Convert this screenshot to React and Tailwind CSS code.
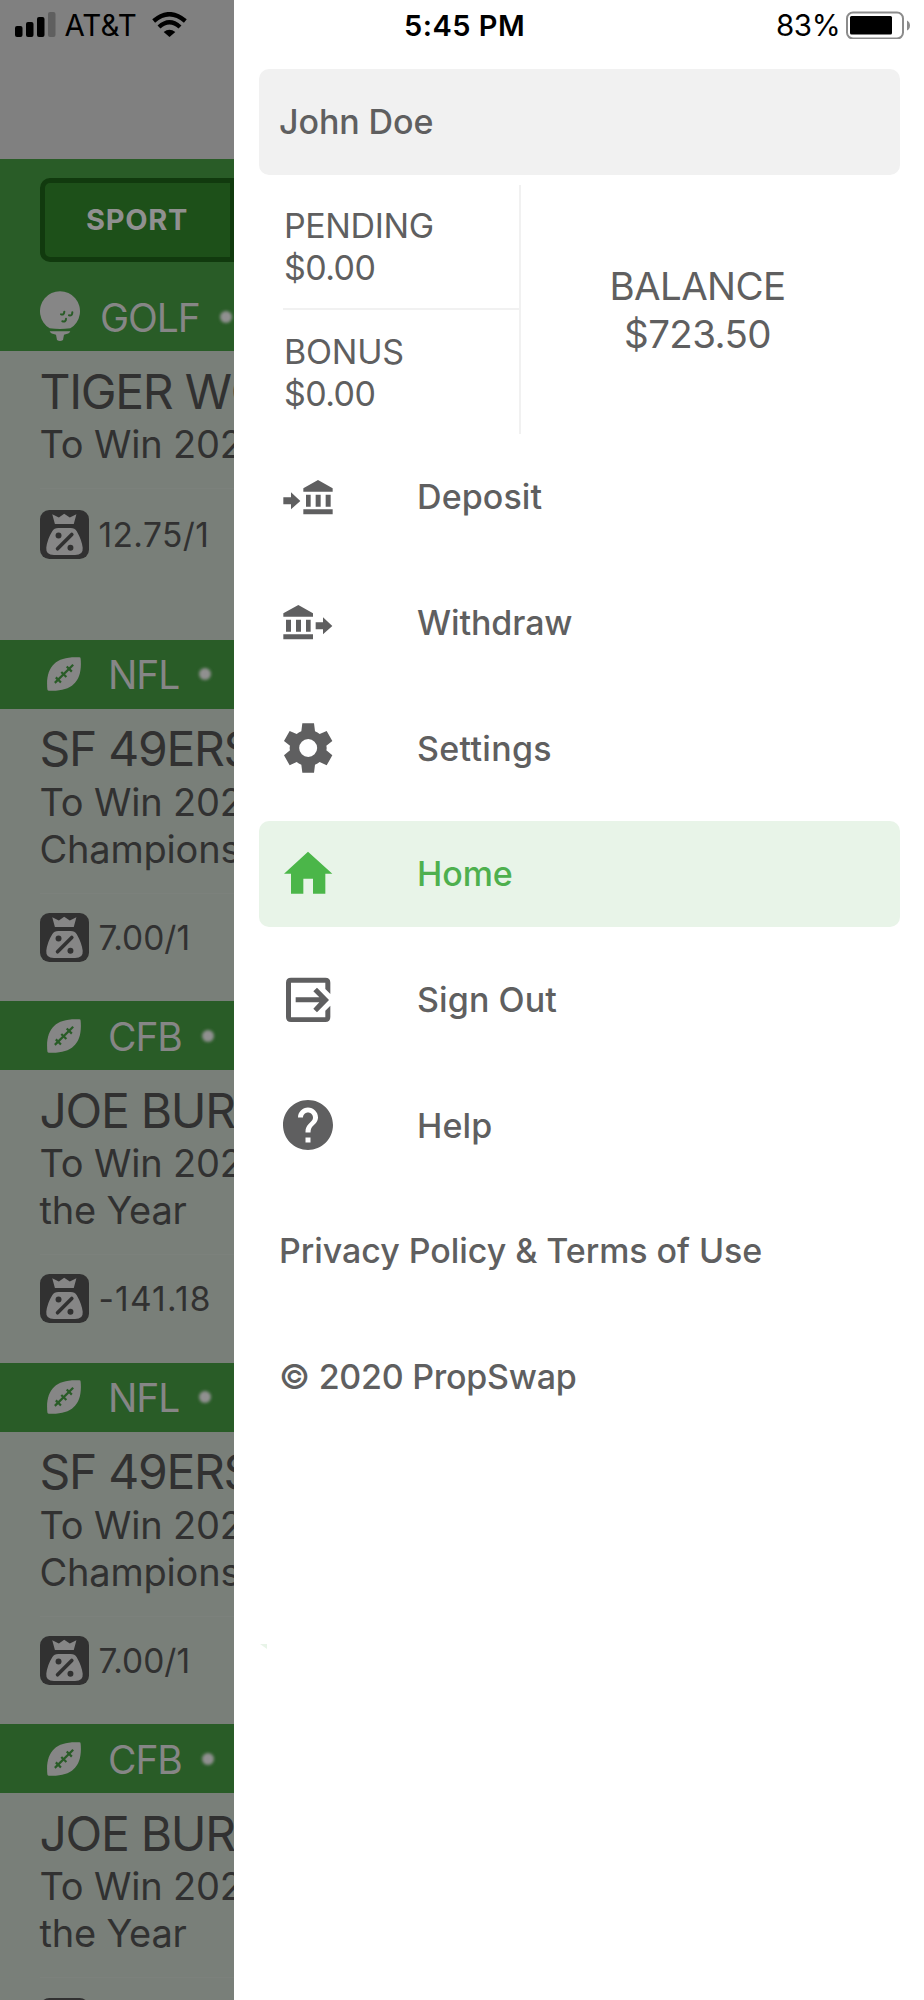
import React from "react";
import { MdHelp } from "react-icons/md";

const BETS = [
  { league: "GOLF", title: "TIGER WO", lines: ["To Win 202"], odds: "12.75/1", tracking: "tracking-[0.4px]", short: true },
  { league: "NFL", title: "SF 49ERS", lines: ["To Win 202", "Champions"], odds: "7.00/1", tracking: "tracking-[0px]" },
  { league: "CFB", title: "JOE BUR", lines: ["To Win 202", "the Year"], odds: "-141.18", tracking: "tracking-[1.2px]" },
  { league: "NFL", title: "SF 49ERS", lines: ["To Win 202", "Champions"], odds: "7.00/1", tracking: "tracking-[0px]" },
  { league: "CFB", title: "JOE BUR", lines: ["To Win 202", "the Year"], odds: "-141.18", tracking: "tracking-[1.2px]" },
];

const MENU = [
  { label: "Deposit", icon: DepositIcon, tracking: "tracking-[0.1px]" },
  { label: "Withdraw", icon: WithdrawIcon, tracking: "tracking-[-0.1px]" },
  { label: "Settings", icon: SettingsIcon, tracking: "tracking-[0.3px]" },
  { label: "Home", icon: HomeIcon, active: true, tracking: "tracking-[-0.1px]" },
  { label: "Sign Out", icon: SignOutIcon, tracking: "tracking-[0.1px]" },
  { label: "Help", icon: HelpIcon, tracking: "tracking-[0.1px]" },
];

function GolfIcon() {
  return (
    <svg viewBox="0 0 120 150" className="w-[40px] h-[50px] shrink-0">
      <path d="M29 112 A60 60 0 1 1 91 112 Q60 116 29 112Z" fill="#868686" />
      <path d="M29 121 H91 Q88 129 72 131 L69 147 Q60 153 51 147 L48 131 Q32 129 29 121Z" fill="#868686" />
      <g fill="none" stroke="#295c27" strokeWidth="6" strokeLinecap="round">
        <path d="M63 70 Q72 73 73 62" />
        <path d="M87 73 Q97 75 97 64" />
        <path d="M67 91 Q78 94 78 83" />
      </g>
    </svg>
  );
}

function FootballIcon() {
  return (
    <svg viewBox="0 0 100 100" className="w-[34px] h-[34px] shrink-0">
      <path d="M95 1 Q99 1 99 5 C105 72 74 103 5 99 Q1 99 1 95 C-5 28 26 -3 95 1Z" fill="#868686" />
      <g stroke="#295c27" strokeWidth="6.5" fill="none">
        <path d="M23 76 L77 23" />
        <path d="M26 60 L41 75 M42 44 L57 59 M58 28 L73 43" />
      </g>
    </svg>
  );
}

function MoneyBagIcon() {
  return (
    <svg viewBox="0 0 148 148" className="w-[49px] h-[49px] shrink-0">
      <rect width="148" height="148" rx="28" fill="#313131" />
      <path d="M37 13 L57 23 L73 11 L90 23 L110 13 L102 42 H45Z" fill="#868686" />
      <path d="M55 54 H93 Q105 54 111 64 Q126 90 129 114 Q131 136 106 136 H42 Q17 136 19 114 Q22 88 37 64 Q43 54 55 54Z" fill="#868686" />
      <path d="M53 117 L96 74" stroke="#313131" strokeWidth="11" strokeLinecap="round" />
      <circle cx="56" cy="77" r="9" fill="#313131" />
      <circle cx="92" cy="114" r="9" fill="#313131" />
    </svg>
  );
}

function DepositIcon() {
  return (
    <svg viewBox="-16 -38 180 180" className="w-[60px] h-[60px]" fill="currentColor">
      <path d="M0 53H23V38L51 64L23 89V74H0Z" />
      <path d="M104 1L148 26V36H60V26Z M68 45H82V81H68Z M97 45H112V81H97Z M127 45H142V81H127Z M60 89H148V104H60Z" />
    </svg>
  );
}

function WithdrawIcon() {
  return (
    <svg viewBox="-16 -38 180 180" className="w-[60px] h-[60px]" fill="currentColor">
      <path d="M97 53H119V38L147 64L119 89V74H97Z" />
      <path d="M45 1L89 26V36H0V26Z M8 45H23V81H8Z M38 45H53V81H38Z M68 45H82V81H68Z M0 89H89V104H0Z" />
    </svg>
  );
}

function SettingsIcon() {
  return (
    <svg viewBox="84 834 180 180" className="w-[60px] h-[60px]" fill="currentColor">
      <path
        fillRule="evenodd"
        d="M157 850H192L195 874Q203 877 209 882L230 873L247 903L229 917Q231 924 229 931L247 946L230 976L209 966Q203 971 195 974L192 998H157L154 974Q146 971 140 966L119 976L102 946L120 931Q118 924 120 917L102 903L119 873L140 882Q146 877 154 874Z M174.500 897A27 27 0 1 0 174.500 951A27 27 0 1 0 174.500 897Z"
      />
    </svg>
  );
}

function HomeIcon() {
  return (
    <svg viewBox="84 132 180 180" className="w-[60px] h-[60px]" fill="#4bb649">
      <path d="M174 155L247 221H226V281H189V236H160V281H123V221H102Z" />
    </svg>
  );
}

function SignOutIcon() {
  return (
    <svg viewBox="84 509 180 180" className="w-[60px] h-[60px]" fill="currentColor">
      <path d="M123 532H226Q241 532 241 547V581L226 566V547H123V651H226V631L241 616V650Q241 665 226 665H123Q108 665 108 650V547Q108 532 123 532Z" />
      <path d="M137 591H208L190 573L201 562L237 599L201 636L190 625L208 606H137Z" />
    </svg>
  );
}

function HelpIcon() {
  return <MdHelp className="w-[60px] h-[60px]" />;
}

function LeagueBar({ league }) {
  const golf = league === "GOLF";
  return (
    <div className="flex items-center h-[69px] bg-[#295c27] text-[39px] leading-[69px] text-[#868686]">
      <div className={golf ? "ml-[40px] -mt-[1px] mr-[20px]" : "ml-[47px] mr-[27px]"}>
        {golf ? <GolfIcon /> : <FootballIcon />}
      </div>
      <span className="mt-[1px] font-normal tracking-[-1.1px]">{league}</span>
      <span className="ml-[20px] w-[12px] h-[12px] rounded-full bg-[#909090] blur-[1.5px] shrink-0" />
    </div>
  );
}

function BetCard({ bet }) {
  return (
    <div className={`bg-[#797f79] pt-[11.5px] pl-[39.5px] text-[#313131] ${bet.short ? "h-[288.5px]" : "h-[292.6px]"}`}>
      <div className="text-[48px] leading-[58px] tracking-[-1.3px]">{bet.title}</div>
      <div className="pt-[0.5px] text-[38px] leading-[47px] tracking-[-0.2px]">
        {bet.lines.map((line) => (
          <div key={line}>{line}</div>
        ))}
      </div>
      <div className="ml-[0.5px] mt-[20px] h-px bg-[#7c817c]" />
      <div className={`ml-[0.5px] flex items-center gap-[9.5px] ${bet.short ? "mt-[20px]" : "mt-[18.5px]"}`}>
        <MoneyBagIcon />
        <span className={`pt-[1.5px] text-[33.5px] leading-[49px] ${bet.tracking}`}>{bet.odds}</span>
      </div>
    </div>
  );
}

function DimmedPage() {
  return (
    <div className="w-[234px] h-[2000px] shrink-0 overflow-hidden whitespace-nowrap">
      <div className="h-[158.5px] bg-[#808080]">
        <div className="flex pt-[12px] pl-[15px] text-black">
          <svg viewBox="0 0 41 25" className="w-[41px] h-[25px]">
            <rect x="0" y="14" width="7.500" height="11" rx="2" />
            <rect x="11" y="10" width="7.500" height="15" rx="2" />
            <rect x="22" y="5" width="7.500" height="20" rx="2" />
            <rect x="33" y="0" width="7.500" height="25" rx="2" fill="#5f5f5f" />
          </svg>
          <span className="ml-[8.5px] -mt-[2px] w-[71.5px] text-[29.5px] leading-[30px]">AT&amp;T</span>
          <svg viewBox="0 0 105 75" className="ml-[16px] w-[35px] h-[25px]" fill="none" stroke="#000" strokeWidth="13">
            <path d="M5 27 Q52 -14 100 27" />
            <path d="M21 45 Q52 16 84 45" />
            <path d="M35 60 Q52 46 70 60 L52.500 75Z" fill="#000" stroke="none" />
          </svg>
        </div>
      </div>
      <div className="bg-[#295c27] pt-[19.5px] pb-[20px] pl-[40px]">
        <div className="h-[84px] w-[194px] rounded-l-[10px] border-[5px] border-r-4 border-[#113a0e] bg-[#1d5019] pl-[41px] text-[29px] font-bold leading-[74px] tracking-[0.7px] text-[#909090]">
          SPORT
        </div>
      </div>
      {BETS.map((bet, i) => (
        <div key={i}>
          <LeagueBar league={bet.league} />
          <BetCard bet={bet} />
        </div>
      ))}
    </div>
  );
}

function StatusRight() {
  return (
    <div className="flex h-[69px] items-start pt-[11px] pl-[170px] text-black">
      <span className="w-[372px] text-[29px] font-semibold leading-[29px] tracking-[0.5px]">5:45 PM</span>
      <span className="w-[69px] text-[29.5px] leading-[29px] tracking-[-0.4px]">83%</span>
      <svg viewBox="0 0 65 28" className="w-[65px] h-[28px]">
        <rect x="2" y="1.500" width="56" height="26" rx="6" fill="none" stroke="#8c8c8c" strokeWidth="2" />
        <rect x="5" y="5" width="42" height="18.500" rx="1.500" />
        <path d="M62 9.500 Q65 11 65 14.500 Q65 18 62 19.500Z" fill="#8c8c8c" />
      </svg>
    </div>
  );
}

function Amount({ label, value, tracking }) {
  return (
    <div className="text-[34px] leading-[42px] pl-[1px]">
      <div className={tracking}>{label}</div>
      <div className="tracking-[-0.6px]">{value}</div>
    </div>
  );
}

function Drawer() {
  return (
    <div className="relative flex-1 bg-white text-[#5f5f60]">
      <StatusRight />
      <div className="ml-[25px] mr-[24.5px] h-[106px] rounded-[10px] bg-[#f1f1f1] pl-[20px] text-[34px] font-medium leading-[106px] tracking-[-0.1px]">
        John Doe
      </div>
      <div className="ml-[49px] mt-[10px] flex h-[248.5px]">
        <div className="w-[238px] border-r-2 border-[#f1f1f1]">
          <div className="h-[125px] border-b-2 border-[#f1f1f1] pt-[20px]">
            <Amount label="PENDING" value="$0.00" tracking="tracking-[-0.4px]" />
          </div>
          <div className="pt-[21px]">
            <Amount label="BONUS" value="$0.00" tracking="tracking-[-0.2px]" />
          </div>
        </div>
        <div className="w-[353px] pt-[77px] text-center text-[38.5px] leading-[48px]">
          <div className="tracking-[-0.6px]">BALANCE</div>
          <div className="tracking-[-0.6px]">$723.50</div>
        </div>
      </div>
      <div className="ml-[25px] mr-[24.5px] mt-[10px] flex flex-col gap-[19.8px] text-[34px] font-medium leading-[106px]">
        {MENU.map(({ label, icon: Icon, active, tracking }) => (
          <div
            key={label}
            className={`flex h-[106px] items-center rounded-[10px] pl-[19px] ${active ? "bg-[#e8f4e8] text-[#4eb04e]" : ""}`}
          >
            <Icon />
            <span className={`ml-[79px] mt-[1px] ${tracking}`}>{label}</span>
          </div>
        ))}
        <div className="h-[106px] pl-[20px] tracking-[-0.06px]">Privacy Policy &amp; Terms of Use</div>
        <div className="h-[106px] pl-[20px] tracking-[-0.25px]">© 2020 PropSwap</div>
      </div>
      <svg viewBox="0 0 7 5" className="absolute left-[26px] top-[1644px] h-[5px] w-[7px]">
        <path d="M0 0H7V5Z" fill="#e8f4e8" />
      </svg>
    </div>
  );
}

function App() {
  return (
    <div className="flex h-[2000px] w-[924px] overflow-hidden font-['Inter',sans-serif]">
      <DimmedPage />
      <Drawer />
    </div>
  );
}

export default App;
